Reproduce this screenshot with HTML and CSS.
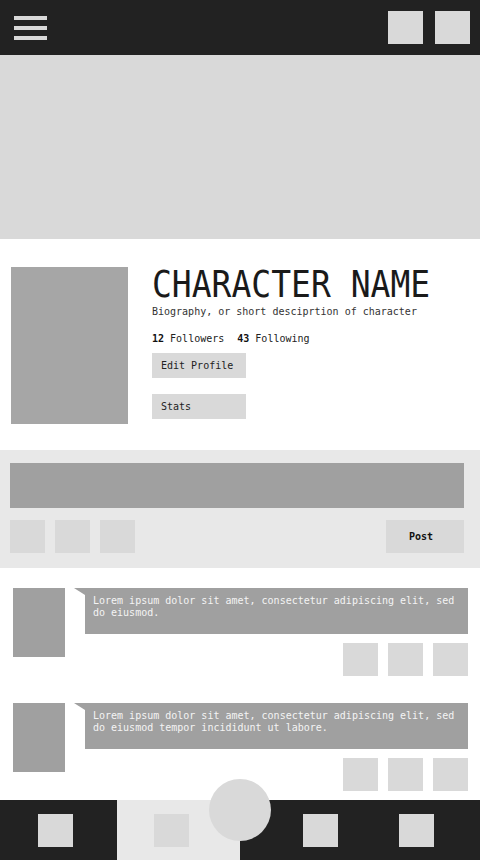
FILE: index.html
```html
<!DOCTYPE html>
<html>
<head>
<meta charset="utf-8">
<link rel="stylesheet" href="styles.css">
</head>
<body>
<div class="app">
  <header class="topbar">
    <div class="burger"><span></span><span></span><span></span></div>
    <div class="top-actions"><div class="sq"></div><div class="sq"></div></div>
  </header>
  <div class="banner"></div>
  <section class="profile">
    <div class="avatar"></div>
    <div class="info">
      <h1 class="name">CHARACTER NAME</h1>
      <p class="bio">Biography, or short desciprtion of character</p>
      <p class="stats"><b>12</b> Followers <span class="gap"></span><b>43</b> Following</p>
      <div class="btn">Edit Profile</div>
      <div class="btn">Stats</div>
    </div>
  </section>
  <section class="composer">
    <div class="input"></div>
    <div class="composer-row">
      <div class="tools"><div class="tool"></div><div class="tool"></div><div class="tool"></div></div>
      <div class="post-btn">Post</div>
    </div>
  </section>
  <section class="feed">
    <div class="post">
      <div class="p-avatar"></div>
      <div class="p-body">
        <div class="bubble">Lorem ipsum dolor sit amet, consectetur adipiscing elit, sed do eiusmod.</div>
        <div class="p-actions"><div class="tool"></div><div class="tool"></div><div class="tool"></div></div>
      </div>
    </div>
    <div class="post">
      <div class="p-avatar"></div>
      <div class="p-body">
        <div class="bubble">Lorem ipsum dolor sit amet, consectetur adipiscing elit, sed do eiusmod tempor incididunt ut labore.</div>
        <div class="p-actions"><div class="tool"></div><div class="tool"></div><div class="tool"></div></div>
      </div>
    </div>
  </section>
  <nav class="bottomnav">
    <div class="nav-item n1"><div class="sq"></div></div>
    <div class="nav-item n2 active"><div class="sq"></div></div>
    <div class="nav-item n3"><div class="sq"></div></div>
    <div class="nav-item n4"><div class="sq"></div></div>
    <div class="fab"></div>
  </nav>
</div>
</body>
</html>
```
FILE: styles.css
```css
* { box-sizing: border-box; }
html, body { margin: 0; padding: 0; }
body {
  width: 480px;
  height: 860px;
  overflow: hidden;
  background: #fff;
  font-family: "DejaVu Sans Mono", "Liberation Mono", monospace;
  color: #111;
}
.app { display: flex; flex-direction: column; width: 480px; height: 860px; }

.topbar {
  height: 55px;
  background: #222;
  display: flex;
  align-items: center;
  justify-content: space-between;
  padding: 0 10px 0 14px;
}
.burger { display: flex; flex-direction: column; gap: 6px; }
.burger span { display: block; width: 33px; height: 4px; background: #d9d9d9; }
.top-actions { display: flex; gap: 12px; }
.top-actions .sq { width: 35px; height: 33px; background: #d9d9d9; }

.banner { height: 184px; background: #d9d9d9; }

.profile {
  height: 211px;
  display: flex;
  padding: 28px 0 0 11px;
  gap: 24px;
}
.avatar { width: 117px; height: 157px; background: #a6a6a6; flex: none; }
.info { display: flex; flex-direction: column; }
.name {
  margin: 0;
  font-weight: normal;
  font-size: 33px;
  line-height: 30px;
  color: #1a1a1a;
  transform: scaleY(1.15);
  transform-origin: left top;
  height: 38px;
  flex: none;
}
.bio { margin: 0; font-size: 10px; line-height: 14px; color: #333; }
.stats { margin: 13px 0 0; font-size: 10px; line-height: 14px; color: #222; }
.stats b { color: #111; }
.stats .gap { display: inline-block; width: 7px; }
.btn {
  width: 94px;
  height: 25px;
  background: #d9d9d9;
  font-size: 10px;
  line-height: 25px;
  padding-left: 9px;
  color: #222;
  margin-top: 7px;
}
.btn + .btn { margin-top: 16px; }

.composer {
  height: 118px;
  background: #e8e8e8;
  padding: 13px 16px 0 10px;
}
.input { height: 45px; background: #a0a0a0; }
.composer-row {
  margin-top: 12px;
  display: flex;
  justify-content: space-between;
}
.tools { display: flex; gap: 10px; }
.tool { width: 35px; height: 33px; background: #d9d9d9; }
.post-btn {
  width: 78px;
  height: 33px;
  background: #d9d9d9;
  font-size: 10px;
  font-weight: bold;
  line-height: 33px;
  padding-left: 23px;
  color: #111;
}

.feed {
  flex: 1;
  padding: 20px 12px 0 13px;
  display: flex;
  flex-direction: column;
  gap: 27px;
}
.post { display: flex; gap: 20px; }
.p-avatar { width: 52px; height: 69px; background: #a0a0a0; flex: none; }
.p-body { flex: 1; display: flex; flex-direction: column; gap: 9px; }
.bubble {
  position: relative;
  height: 46px;
  background: #a0a0a0;
  color: #f4f4f4;
  font-size: 10px;
  line-height: 12px;
  padding: 7px 8px 0 8px;
}
.bubble::before {
  content: "";
  position: absolute;
  left: -11px;
  top: 0;
  border-top: 7px solid #a0a0a0;
  border-left: 11px solid transparent;
}
.p-actions { display: flex; justify-content: flex-end; gap: 10px; }

.bottomnav {
  position: relative;
  height: 60px;
  background: #222;
  display: flex;
}
.nav-item { height: 60px; padding-top: 14px; }
.nav-item .sq { width: 35px; height: 33px; background: #d9d9d9; }
.n1 { width: 117px; padding-left: 38px; }
.n2 { width: 123px; padding-left: 37px; background: #e8e8e8; }
.n3 { width: 96px; padding-left: 63px; }
.n4 { width: 144px; padding-left: 63px; }
.fab {
  position: absolute;
  left: 209px;
  top: -21px;
  width: 62px;
  height: 62px;
  border-radius: 50%;
  background: #d9d9d9;
}
```
